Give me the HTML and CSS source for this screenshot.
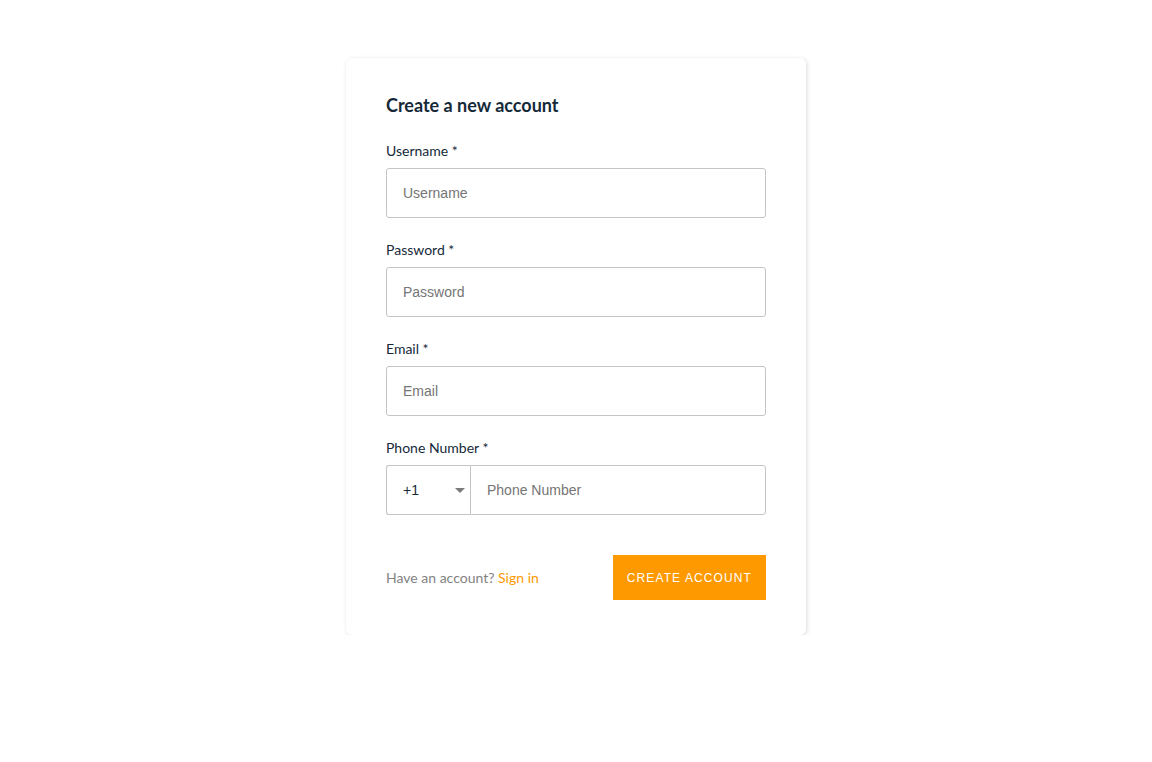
FILE: index.html
```html
<!DOCTYPE html>
<html>
<head>
<meta charset="utf-8">
<link rel="stylesheet" href="styles.css">
</head>
<body>
<div class="container">
  <div class="card">
    <div class="header">Create a new account</div>
    <div class="field">
      <div class="label">Username *</div>
      <input class="input" placeholder="Username">
    </div>
    <div class="field">
      <div class="label">Password *</div>
      <input class="input" type="password" placeholder="Password">
    </div>
    <div class="field">
      <div class="label">Email *</div>
      <input class="input" placeholder="Email">
    </div>
    <div class="field">
      <div class="label">Phone Number *</div>
      <div class="phone">
        <div class="select">
          <span>+1</span>
          <span class="arrow"></span>
        </div>
        <input class="input phone-input" placeholder="Phone Number">
      </div>
    </div>
    <div class="footer">
      <span class="hint">Have an account? <a class="link" href="#">Sign in</a></span>
      <button class="button">Create Account</button>
    </div>
  </div>
</div>
</body>
</html>
```
FILE: styles.css
```css
body {
  margin: 8px;
  background: #fff;
  font-family: "Lato", "Open Sans", sans-serif;
}
.container {
  display: flex;
  justify-content: center;
  margin-top: 50px;
}
.card {
  width: 460px;
  box-sizing: border-box;
  padding: 35px 40px;
  background: #fff;
  border-radius: 6px;
  box-shadow: 1px 1px 4px 0 rgba(0, 0, 0, 0.15);
}
.header {
  color: #152939;
  font-size: 18px;
  font-weight: 700;
  line-height: 24px;
  margin-bottom: 24px;
}
.field {
  margin-bottom: 22px;
  display: flex;
  flex-direction: column;
}
.label {
  color: #152939;
  font-size: 14px;
  line-height: 20px;
  margin-bottom: 7px;
}
.input {
  display: block;
  box-sizing: border-box;
  width: 100%;
  height: 50px;
  padding: 0 16px;
  border: 1px solid #c4c4c4;
  border-radius: 3px;
  font-family: "Liberation Sans", Arial, sans-serif;
  font-size: 14px;
  color: #152939;
  background: #fff;
  outline: none;
}
.input::placeholder {
  color: #757575;
}
.phone {
  display: flex;
}
.select {
  width: 84px;
  height: 50px;
  box-sizing: border-box;
  border: 1px solid #c4c4c4;
  border-right: none;
  border-radius: 3px 0 0 3px;
  display: flex;
  align-items: center;
  justify-content: space-between;
  padding: 0 5px 0 16px;
  font-family: "Liberation Sans", Arial, sans-serif;
  font-size: 14px;
  color: #152939;
}
.arrow {
  width: 0;
  height: 0;
  border-left: 5px solid transparent;
  border-right: 5px solid transparent;
  border-top: 5px solid #7b7b7b;
  margin-top: 1px;
}
.phone-input {
  flex: 1;
  border-radius: 0 3px 3px 0;
}
.footer {
  display: flex;
  justify-content: space-between;
  align-items: center;
  margin-top: 40px;
}
.hint {
  color: #828282;
  font-size: 14px;
}
.link {
  color: #ff9900;
  text-decoration: none;
}
.button {
  min-width: 153px;
  height: 45px;
  border: none;
  background: #ff9900;
  color: #fff;
  font-family: "Liberation Sans", Arial, sans-serif;
  font-size: 12px;
  letter-spacing: 1.1px;
  text-transform: uppercase;
  padding: 0 14px;
  cursor: pointer;
}
```
